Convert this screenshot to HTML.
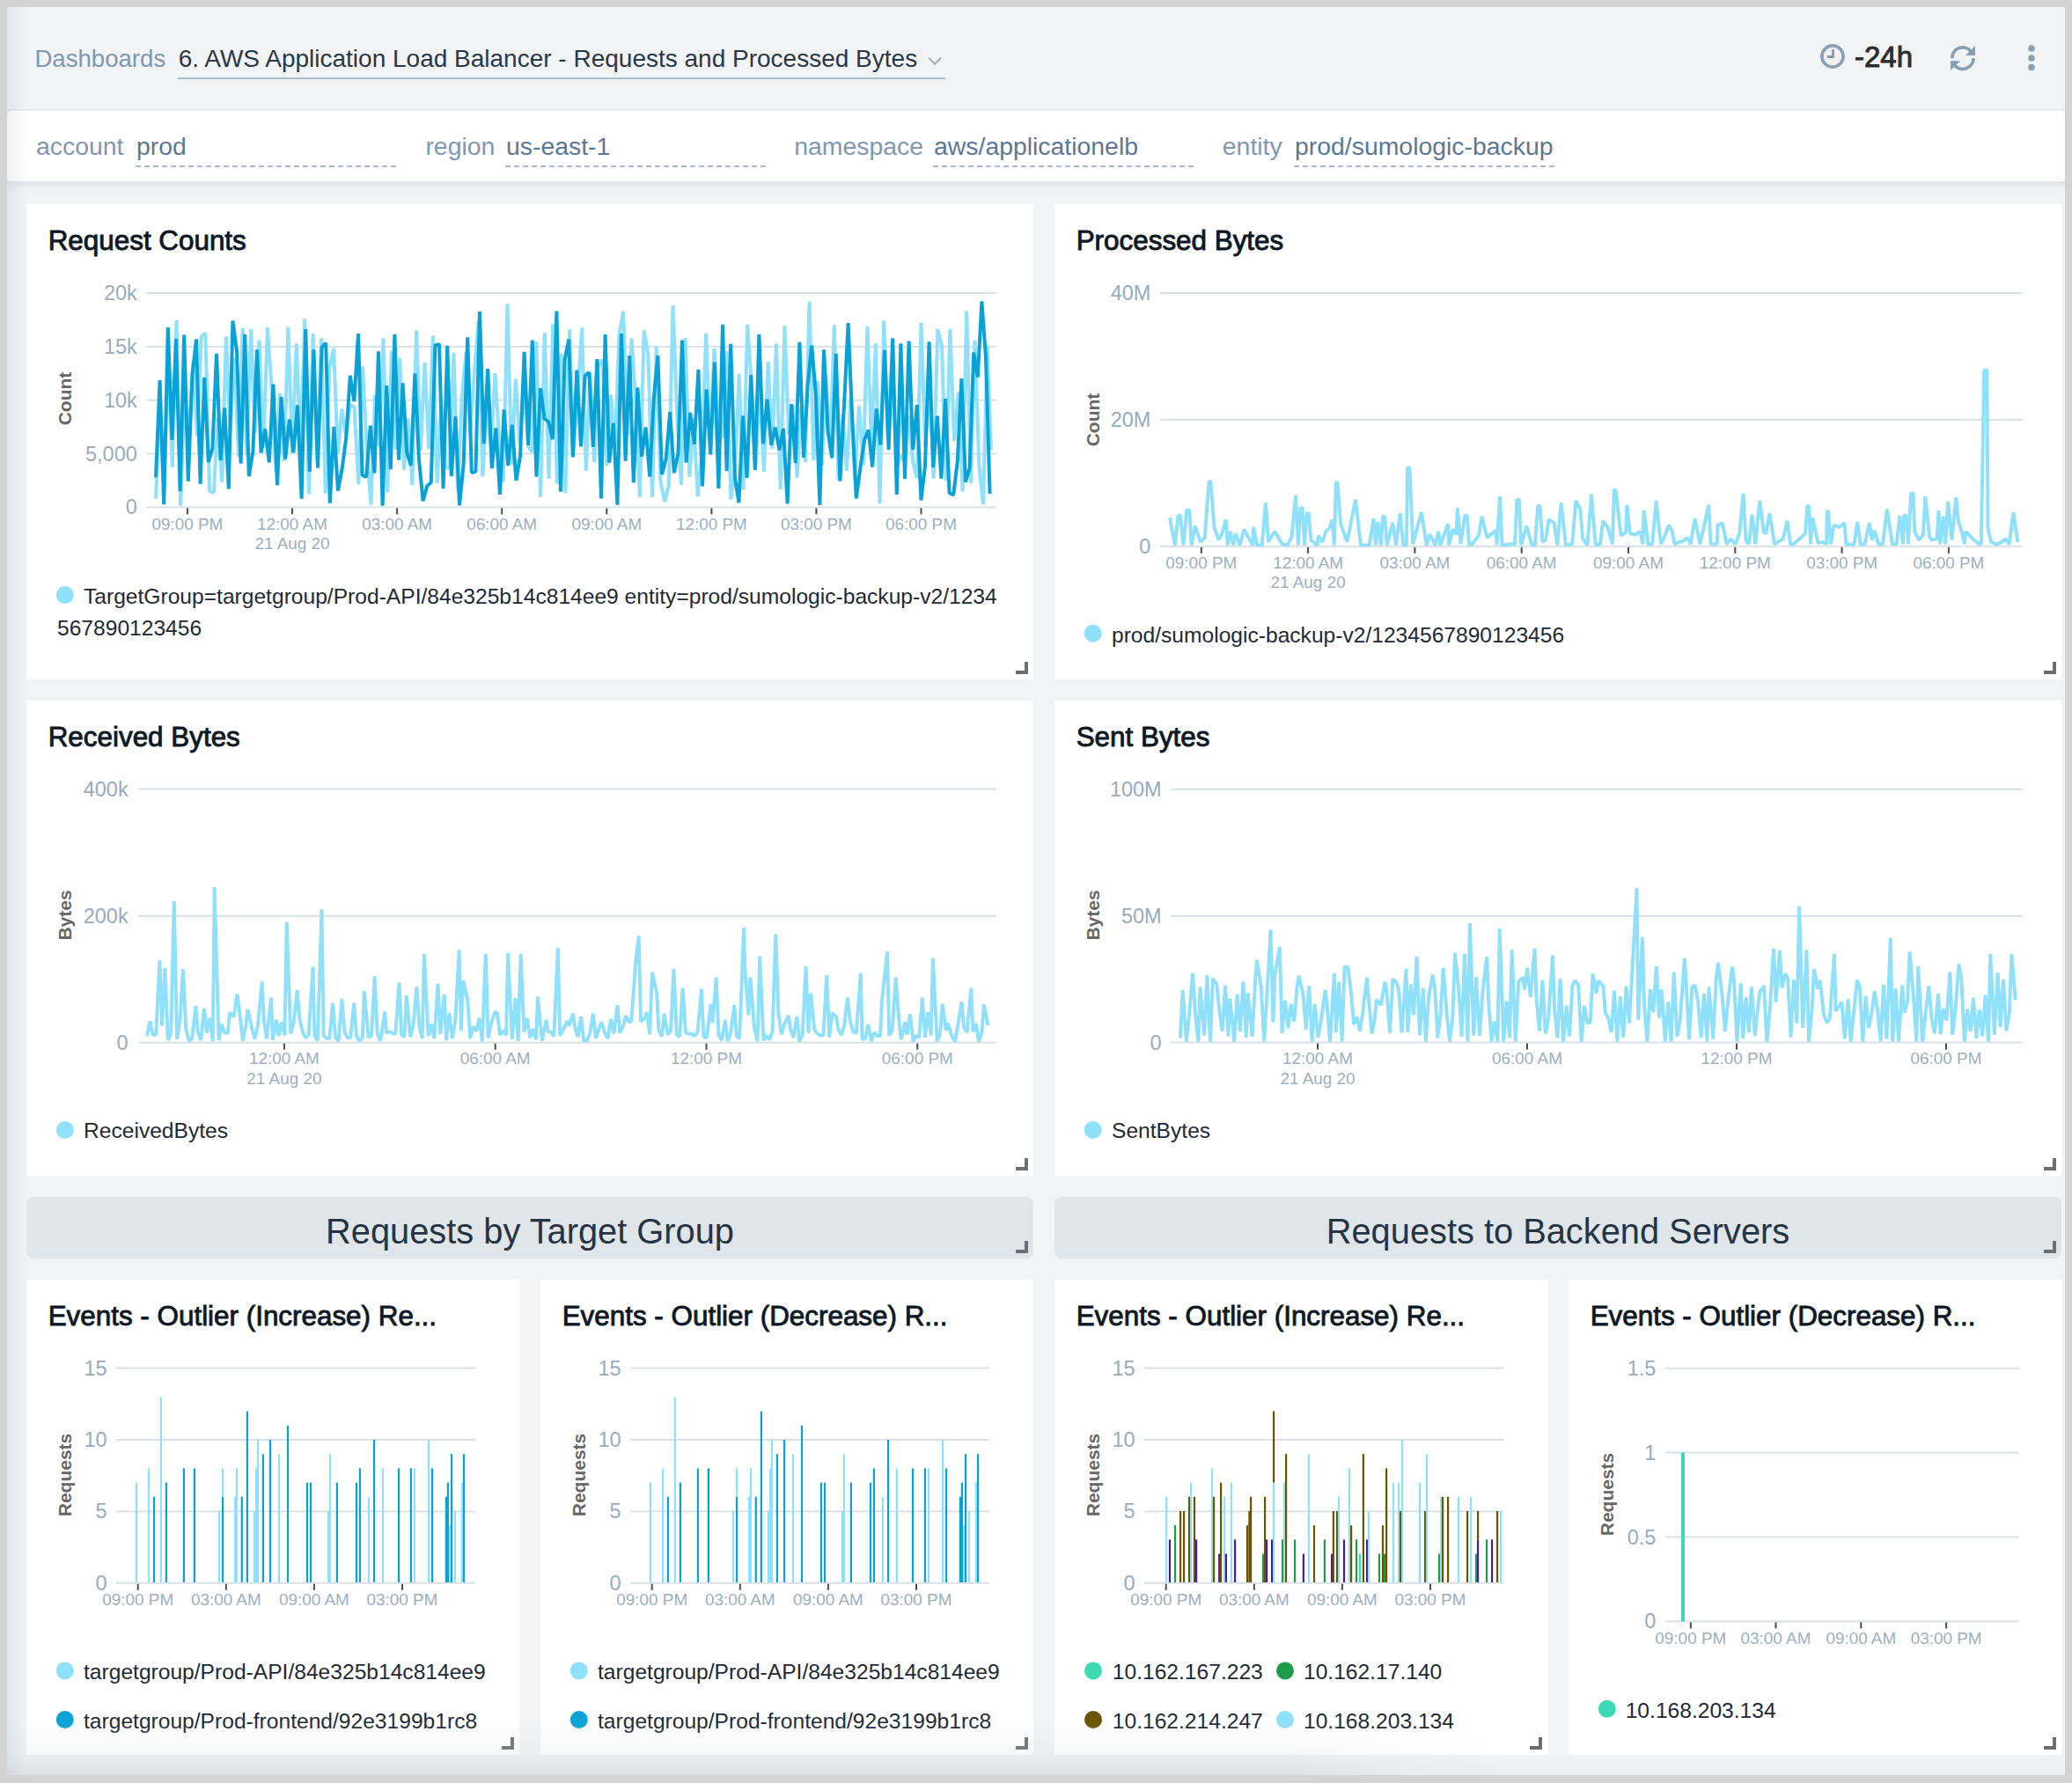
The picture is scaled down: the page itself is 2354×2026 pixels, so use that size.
<!DOCTYPE html>
<html><head><meta charset="utf-8"><style>
html,body{margin:0;padding:0;}
body{width:2354px;height:2026px;overflow:hidden;background:#d3d3d3;position:relative;font-family:"Liberation Sans", sans-serif;}
#app{position:absolute;left:8px;top:8px;width:2338px;height:2009px;background:#f2f3f5;}
#shl{position:absolute;left:8px;top:8px;width:24px;height:2009px;background:linear-gradient(90deg,rgba(60,70,80,.075),rgba(60,70,80,0));}
#shb{position:absolute;left:8px;top:206px;width:2338px;height:13px;background:linear-gradient(180deg,rgba(150,165,180,.2),rgba(150,165,180,.06) 55%,rgba(150,165,180,0));}
#fade{position:absolute;left:8px;top:1950px;width:1700px;height:67px;background:linear-gradient(180deg,rgba(205,208,211,0),rgba(205,208,211,.16) 62%,rgba(195,199,203,.42));-webkit-mask-image:linear-gradient(90deg,#000 85%,transparent);}
#fade2{position:absolute;left:1640px;top:1990px;width:706px;height:27px;background:linear-gradient(180deg,rgba(205,208,211,0),rgba(205,208,211,.12));}
svg{position:absolute;left:0;top:0;}
text{font-family:"Liberation Sans", sans-serif;}
</style></head><body>
<div id="app"></div>
<svg width="2354" height="2026" viewBox="0 0 2354 2026">
<rect x="30" y="232" width="1144" height="540" fill="#fff"/>
<text x="54.7" y="283.5" font-size="31.4" fill="#0d1926" font-weight="normal" text-anchor="start" stroke="#0d1926" stroke-width="0.9">Request Counts</text>
<path d="M1154 764H1166V752" stroke="#6e6e6e" stroke-width="4" fill="none" stroke-linecap="butt"/>
<rect x="1198" y="232" width="1144" height="540" fill="#fff"/>
<text x="1222.7" y="283.5" font-size="31.4" fill="#0d1926" font-weight="normal" text-anchor="start" stroke="#0d1926" stroke-width="0.9">Processed Bytes</text>
<path d="M2322 764H2334V752" stroke="#6e6e6e" stroke-width="4" fill="none" stroke-linecap="butt"/>
<rect x="30" y="796" width="1144" height="540" fill="#fff"/>
<text x="54.7" y="847.5" font-size="31.4" fill="#0d1926" font-weight="normal" text-anchor="start" stroke="#0d1926" stroke-width="0.9">Received Bytes</text>
<path d="M1154 1328H1166V1316" stroke="#6e6e6e" stroke-width="4" fill="none" stroke-linecap="butt"/>
<rect x="1198" y="796" width="1144" height="540" fill="#fff"/>
<text x="1222.7" y="847.5" font-size="31.4" fill="#0d1926" font-weight="normal" text-anchor="start" stroke="#0d1926" stroke-width="0.9">Sent Bytes</text>
<path d="M2322 1328H2334V1316" stroke="#6e6e6e" stroke-width="4" fill="none" stroke-linecap="butt"/>
<rect x="166.5" y="332.0" width="965.5" height="2" fill="#d9e1e7"/>
<text x="155.8" y="341.0" font-size="23.5" fill="#97abbf" font-weight="normal" text-anchor="end" >20k</text>
<rect x="166.5" y="392.9" width="965.5" height="2" fill="#d9e1e7"/>
<text x="155.8" y="401.9" font-size="23.5" fill="#97abbf" font-weight="normal" text-anchor="end" >15k</text>
<rect x="166.5" y="453.7" width="965.5" height="2" fill="#d9e1e7"/>
<text x="155.8" y="462.7" font-size="23.5" fill="#97abbf" font-weight="normal" text-anchor="end" >10k</text>
<rect x="166.5" y="514.5" width="965.5" height="2" fill="#d9e1e7"/>
<text x="155.8" y="523.5" font-size="23.5" fill="#97abbf" font-weight="normal" text-anchor="end" >5,000</text>
<rect x="166.5" y="575.4" width="965.5" height="2" fill="#d9e1e7"/>
<text x="155.8" y="584.4" font-size="23.5" fill="#97abbf" font-weight="normal" text-anchor="end" >0</text>
<rect x="211.9" y="577.4" width="2" height="7" fill="#4d4d4d"/>
<text x="212.9" y="601.6" font-size="18.9" fill="#9cafc1" font-weight="normal" text-anchor="middle" >09:00 PM</text>
<rect x="331.0" y="577.4" width="2" height="7" fill="#4d4d4d"/>
<text x="332.0" y="601.6" font-size="18.9" fill="#9cafc1" font-weight="normal" text-anchor="middle" >12:00 AM</text>
<text x="332.0" y="624.1" font-size="18.9" fill="#9cafc1" font-weight="normal" text-anchor="middle" >21 Aug 20</text>
<rect x="450.1" y="577.4" width="2" height="7" fill="#4d4d4d"/>
<text x="451.1" y="601.6" font-size="18.9" fill="#9cafc1" font-weight="normal" text-anchor="middle" >03:00 AM</text>
<rect x="569.2" y="577.4" width="2" height="7" fill="#4d4d4d"/>
<text x="570.2" y="601.6" font-size="18.9" fill="#9cafc1" font-weight="normal" text-anchor="middle" >06:00 AM</text>
<rect x="688.3" y="577.4" width="2" height="7" fill="#4d4d4d"/>
<text x="689.3" y="601.6" font-size="18.9" fill="#9cafc1" font-weight="normal" text-anchor="middle" >09:00 AM</text>
<rect x="807.4" y="577.4" width="2" height="7" fill="#4d4d4d"/>
<text x="808.4" y="601.6" font-size="18.9" fill="#9cafc1" font-weight="normal" text-anchor="middle" >12:00 PM</text>
<rect x="926.4" y="577.4" width="2" height="7" fill="#4d4d4d"/>
<text x="927.4" y="601.6" font-size="18.9" fill="#9cafc1" font-weight="normal" text-anchor="middle" >03:00 PM</text>
<rect x="1045.5" y="577.4" width="2" height="7" fill="#4d4d4d"/>
<text x="1046.5" y="601.6" font-size="18.9" fill="#9cafc1" font-weight="normal" text-anchor="middle" >06:00 PM</text>
<text x="0" y="0" font-size="21" fill="#676767" font-weight="bold" text-anchor="middle" transform="translate(81.0,453.0) rotate(-90)">Count</text>
<polyline points="177.0,566.8 181.7,463.0 186.4,556.7 191.1,402.5 195.8,530.8 200.5,363.8 205.2,574.7 209.9,440.9 214.6,495.0 219.3,411.4 224.0,495.2 228.7,382.3 233.4,378.6 238.1,557.8 242.8,559.9 247.5,474.3 252.2,547.9 256.9,382.4 261.6,491.8 266.3,406.9 271.0,518.9 275.7,372.6 280.4,517.2 285.1,373.8 289.8,491.9 294.5,386.5 299.2,509.2 303.9,372.1 308.6,440.3 313.3,535.9 318.0,446.9 322.7,524.2 327.4,371.6 332.1,514.6 336.8,390.3 341.5,511.2 346.2,362.4 350.9,561.4 355.6,379.0 360.3,524.1 365.0,384.2 369.7,560.7 374.4,418.4 379.1,396.1 383.8,515.3 388.5,464.8 393.2,496.1 397.9,459.8 402.6,462.8 407.3,550.2 412.0,416.4 416.7,510.1 421.4,573.6 426.1,449.1 430.8,507.1 435.5,384.5 440.2,559.5 444.9,398.4 449.6,510.7 454.3,406.8 459.0,533.8 463.7,475.1 468.4,551.1 473.1,375.6 477.8,511.9 482.5,412.1 487.2,510.2 491.9,381.2 496.6,549.2 501.3,457.4 506.0,530.2 510.7,532.2 515.4,400.7 520.1,557.5 524.8,451.0 529.5,400.0 534.2,492.6 538.9,422.2 543.6,364.6 548.3,541.6 553.0,462.7 557.7,508.0 562.4,423.8 567.1,499.7 571.8,547.5 576.5,345.3 581.2,527.9 585.9,430.7 590.6,504.9 595.3,426.9 600.0,506.8 604.7,513.5 609.4,388.3 614.1,564.7 618.8,378.4 623.5,543.9 628.2,368.1 632.9,549.7 637.6,401.6 642.3,560.5 647.0,374.3 651.7,512.2 656.4,448.3 661.1,372.3 665.8,535.0 670.5,423.3 675.2,525.2 679.9,415.6 684.6,408.5 689.3,529.4 694.0,448.5 698.7,509.4 703.4,380.1 708.1,353.9 712.8,493.8 717.5,384.5 722.2,458.2 726.9,565.0 731.6,375.3 736.3,402.4 741.0,564.8 745.7,393.7 750.4,546.9 755.1,570.3 759.8,551.8 764.5,347.0 769.2,470.6 773.9,551.0 778.6,384.1 783.3,542.0 788.0,474.8 792.7,564.1 797.4,516.3 802.1,378.5 806.8,497.7 811.5,396.0 816.2,477.5 820.9,497.7 825.6,399.1 830.3,567.4 835.0,534.6 839.7,425.0 844.4,556.6 849.1,368.7 853.8,435.7 858.5,528.1 863.2,440.1 867.9,536.2 872.6,411.1 877.3,510.2 882.0,390.3 886.7,556.0 891.4,370.0 896.1,493.6 900.8,460.7 905.5,543.0 910.2,464.3 914.9,525.1 919.6,342.5 924.3,523.1 929.0,432.9 933.7,529.0 938.4,425.0 943.1,510.6 947.8,369.2 952.5,544.7 957.2,471.0 961.9,534.9 966.6,449.8 971.3,543.9 976.0,461.3 980.7,528.8 985.4,370.9 990.1,505.7 994.8,390.3 999.5,572.2 1004.2,364.4 1008.9,501.1 1013.6,399.6 1018.3,531.9 1023.0,517.1 1027.7,524.9 1032.4,472.5 1037.1,525.0 1041.8,543.0 1046.5,366.7 1051.2,508.7 1055.9,433.4 1060.6,543.6 1065.3,373.9 1070.0,392.9 1074.7,546.1 1079.4,373.9 1084.1,501.3 1088.8,445.7 1093.5,558.5 1098.2,353.4 1102.9,549.3 1107.6,387.0 1112.3,528.8 1117.0,573.1 1121.7,394.3 1126.0,511.3" fill="none" stroke="#8ee0fb" stroke-width="4" stroke-linejoin="bevel"/>
<polyline points="177.0,542.4 181.6,432.0 186.2,573.2 190.8,372.0 195.4,500.0 200.0,385.1 204.6,558.2 209.2,380.5 213.8,546.8 218.4,426.7 223.0,385.4 227.6,550.0 232.2,428.8 236.8,525.1 241.4,509.5 246.0,401.8 250.6,523.0 255.2,463.6 259.8,555.7 264.4,364.6 269.0,398.8 273.6,526.8 278.2,379.9 282.8,541.3 287.4,512.8 292.0,397.3 296.6,514.5 301.2,487.4 305.8,525.4 310.4,436.7 315.0,551.5 319.6,451.2 324.2,521.7 328.8,476.4 333.4,514.3 338.0,460.4 342.6,566.7 347.2,374.1 351.8,535.9 356.4,397.4 361.0,531.8 365.6,394.6 370.2,389.8 374.8,571.6 379.4,485.0 384.0,557.5 388.6,532.9 393.2,498.1 397.8,426.9 402.4,456.2 407.0,379.0 411.6,539.9 416.2,542.0 420.8,483.6 425.4,537.6 430.0,399.2 434.6,574.6 439.2,438.0 443.8,533.3 448.4,379.9 453.0,522.6 457.6,435.4 462.2,514.2 466.8,529.0 471.4,424.3 476.0,522.4 480.6,569.2 485.2,552.3 489.8,547.9 494.4,392.4 499.0,391.2 503.6,555.2 508.2,392.8 512.8,541.2 517.4,473.3 522.0,574.2 526.6,527.8 531.2,383.3 535.8,537.0 540.4,535.8 545.0,354.1 549.6,504.1 554.2,419.1 558.8,532.2 563.4,486.3 568.0,562.0 572.6,465.3 577.2,529.1 581.8,482.8 586.4,546.0 591.0,518.6 595.6,399.9 600.2,506.0 604.8,386.7 609.4,541.7 614.0,441.2 618.6,475.9 623.2,479.1 627.8,499.3 632.4,353.5 637.0,558.7 641.6,408.7 646.2,385.6 650.8,519.5 655.4,420.6 660.0,507.4 664.6,427.1 669.2,423.0 673.8,507.9 678.4,408.1 683.0,566.4 687.6,380.0 692.2,525.7 696.8,480.8 701.4,573.6 706.0,378.8 710.6,523.9 715.2,404.2 719.8,548.5 724.4,440.4 729.0,518.8 733.6,485.5 738.2,541.7 742.8,452.5 747.4,404.0 752.0,539.3 756.6,521.6 761.2,468.2 765.8,537.4 770.4,515.2 775.0,386.6 779.6,525.6 784.2,469.0 788.8,505.0 793.4,420.0 798.0,552.5 802.6,442.3 807.2,516.5 811.8,411.5 816.4,555.0 821.0,368.9 825.6,535.2 830.2,390.9 834.8,541.5 839.4,571.2 844.0,472.5 848.6,543.0 853.2,426.0 857.8,534.2 862.4,379.9 867.0,504.3 871.6,453.6 876.2,505.6 880.8,485.6 885.4,511.4 890.0,487.2 894.6,572.5 899.2,459.2 903.8,526.1 908.4,388.7 913.0,519.9 917.6,437.6 922.2,392.6 926.8,447.6 931.4,574.0 936.0,397.3 940.6,490.3 945.2,520.5 949.8,401.8 954.4,546.7 959.0,460.8 963.6,367.1 968.2,475.4 972.8,566.3 977.4,531.3 982.0,500.2 986.6,488.5 991.2,530.7 995.8,464.5 1000.4,505.5 1005.0,397.9 1009.6,511.2 1014.2,384.2 1018.8,561.9 1023.4,390.4 1028.0,544.1 1032.6,387.5 1037.2,510.9 1041.8,460.1 1046.4,568.4 1051.0,529.5 1055.6,388.2 1060.2,531.2 1064.8,472.7 1069.4,543.8 1074.0,453.0 1078.6,560.1 1083.2,562.4 1087.8,523.9 1092.4,430.2 1097.0,547.8 1101.6,531.7 1106.2,400.6 1110.8,428.6 1115.4,342.5 1120.0,406.4 1124.6,561.1" fill="none" stroke="#0aa2d6" stroke-width="4" stroke-linejoin="bevel"/>
<circle cx="73.8" cy="676" r="10" fill="#8ee0fb"/>
<text x="95.0" y="685.6" font-size="24.6" fill="#1d2936" font-weight="normal" text-anchor="start" >TargetGroup=targetgroup/Prod-API/84e325b14c814ee9 entity=prod/sumologic-backup-v2/1234</text>
<text x="65.0" y="721.6" font-size="24.6" fill="#1d2936" font-weight="normal" text-anchor="start" >567890123456</text>
<rect x="1318" y="332.0" width="980" height="2" fill="#d9e1e7"/>
<text x="1307.4" y="341.0" font-size="23.5" fill="#97abbf" font-weight="normal" text-anchor="end" >40M</text>
<rect x="1318" y="475.9" width="980" height="2" fill="#d9e1e7"/>
<text x="1307.4" y="484.9" font-size="23.5" fill="#97abbf" font-weight="normal" text-anchor="end" >20M</text>
<rect x="1318" y="619.8" width="980" height="2" fill="#d9e1e7"/>
<text x="1307.4" y="628.8" font-size="23.5" fill="#97abbf" font-weight="normal" text-anchor="end" >0</text>
<rect x="1363.8" y="621.8" width="2" height="7" fill="#4d4d4d"/>
<text x="1364.8" y="645.6" font-size="18.9" fill="#9cafc1" font-weight="normal" text-anchor="middle" >09:00 PM</text>
<rect x="1485.1" y="621.8" width="2" height="7" fill="#4d4d4d"/>
<text x="1486.1" y="645.6" font-size="18.9" fill="#9cafc1" font-weight="normal" text-anchor="middle" >12:00 AM</text>
<text x="1486.1" y="668.1" font-size="18.9" fill="#9cafc1" font-weight="normal" text-anchor="middle" >21 Aug 20</text>
<rect x="1606.4" y="621.8" width="2" height="7" fill="#4d4d4d"/>
<text x="1607.4" y="645.6" font-size="18.9" fill="#9cafc1" font-weight="normal" text-anchor="middle" >03:00 AM</text>
<rect x="1727.7" y="621.8" width="2" height="7" fill="#4d4d4d"/>
<text x="1728.7" y="645.6" font-size="18.9" fill="#9cafc1" font-weight="normal" text-anchor="middle" >06:00 AM</text>
<rect x="1849.0" y="621.8" width="2" height="7" fill="#4d4d4d"/>
<text x="1850.0" y="645.6" font-size="18.9" fill="#9cafc1" font-weight="normal" text-anchor="middle" >09:00 AM</text>
<rect x="1970.3" y="621.8" width="2" height="7" fill="#4d4d4d"/>
<text x="1971.3" y="645.6" font-size="18.9" fill="#9cafc1" font-weight="normal" text-anchor="middle" >12:00 PM</text>
<rect x="2091.6" y="621.8" width="2" height="7" fill="#4d4d4d"/>
<text x="2092.6" y="645.6" font-size="18.9" fill="#9cafc1" font-weight="normal" text-anchor="middle" >03:00 PM</text>
<rect x="2212.9" y="621.8" width="2" height="7" fill="#4d4d4d"/>
<text x="2213.9" y="645.6" font-size="18.9" fill="#9cafc1" font-weight="normal" text-anchor="middle" >06:00 PM</text>
<text x="0" y="0" font-size="21" fill="#676767" font-weight="bold" text-anchor="middle" transform="translate(1248.7,477.0) rotate(-90)">Count</text>
<polyline points="1328.9,588.1 1334.9,619.4 1338.5,585.7 1340.9,585.7 1344.5,619.4 1348.2,579.6 1351.3,579.6 1353.7,619.4 1357.8,597.7 1363.8,615.8 1368.7,611.0 1373.5,547.1 1375.4,547.1 1379.5,598.9 1384.4,613.4 1388.0,607.4 1392.8,590.5 1394.7,619.4 1397.6,603.8 1401.3,619.4 1403.7,606.2 1408.5,619.4 1413.3,601.4 1423.0,619.4 1424.2,598.9 1427.8,619.4 1433.8,619.4 1437.9,571.2 1441.1,615.8 1448.3,603.8 1456.8,618.2 1462.8,619.4 1467.6,609.8 1472.0,562.7 1474.9,619.4 1477.3,577.2 1479.7,577.2 1482.1,619.4 1484.5,583.3 1486.9,583.3 1489.3,613.4 1496.6,619.4 1497.8,608.6 1502.6,615.8 1506.2,603.8 1511.1,598.9 1513.5,590.5 1515.9,619.4 1517.8,548.3 1519.5,548.3 1523.1,595.3 1530.4,615.8 1540.0,567.6 1546.0,619.4 1555.7,619.4 1560.5,589.3 1562.9,619.4 1565.3,592.9 1569.0,619.4 1570.9,586.9 1573.3,586.9 1575.7,619.4 1582.2,594.1 1585.9,619.4 1590.7,583.3 1594.3,619.4 1597.9,619.4 1599.1,531.4 1601.5,531.4 1605.2,618.2 1614.8,582.0 1620.8,619.4 1624.5,607.4 1630.5,619.4 1634.1,603.8 1636.5,619.4 1645.0,595.3 1646.2,619.4 1650.5,601.4 1654.6,607.4 1655.8,577.2 1659.5,618.2 1664.3,585.7 1666.7,585.7 1669.1,619.4 1672.7,618.2 1680.0,608.6 1683.6,586.9 1689.6,611.0 1699.3,602.6 1700.5,619.4 1704.1,563.9 1706.5,619.4 1716.2,618.2 1721.0,618.2 1723.4,567.6 1725.8,567.6 1728.2,619.4 1734.3,597.7 1740.3,619.4 1743.9,619.4 1747.1,574.8 1749.5,574.8 1752.4,615.8 1756.0,613.4 1759.6,590.5 1765.6,594.1 1769.3,619.4 1773.6,571.2 1778.9,619.4 1786.1,618.2 1790.5,568.8 1795.3,578.4 1798.2,612.2 1803.5,619.4 1807.9,561.5 1812.7,619.4 1818.0,618.2 1821.2,591.8 1826.5,599.1 1831.9,618.4 1833.8,556.9 1835.7,556.9 1841.5,608.7 1847.1,605.1 1848.3,573.7 1851.9,606.3 1857.9,607.5 1863.2,603.9 1866.4,618.4 1867.6,579.8 1872.4,618.4 1877.2,618.4 1881.6,568.9 1886.9,618.4 1890.5,611.1 1896.0,596.7 1899.4,602.7 1902.6,618.4 1907.4,616.0 1912.2,614.8 1917.0,611.1 1920.7,618.4 1925.5,589.4 1931.5,618.4 1941.2,573.7 1943.6,618.4 1950.8,618.4 1951.5,596.7 1956.9,594.3 1961.7,618.4 1966.5,612.4 1971.3,618.4 1976.2,606.3 1980.5,560.5 1983.4,613.6 1987.0,618.4 1990.6,584.6 1994.3,618.4 1999.1,568.9 2003.9,605.1 2006.3,606.3 2010.4,583.4 2016.0,618.4 2025.6,612.4 2030.5,591.8 2034.1,618.4 2037.7,618.4 2051.0,606.3 2053.4,575.0 2055.3,575.0 2057.0,618.4 2059.4,588.2 2065.4,617.2 2070.3,616.0 2075.1,618.4 2075.8,581.0 2077.0,581.0 2079.9,618.4 2083.5,596.7 2089.6,599.1 2095.6,594.3 2097.3,618.4 2106.5,618.4 2110.1,593.1 2113.7,618.4 2118.5,618.4 2123.8,594.3 2127.0,613.6 2129.4,602.7 2134.2,618.4 2139.0,618.4 2143.9,578.6 2149.9,618.4 2154.7,618.4 2158.3,585.8 2162.0,618.4 2163.2,585.8 2165.6,585.8 2168.0,618.4 2171.1,560.5 2173.6,560.5 2175.2,603.9 2180.1,613.6 2184.9,607.5 2187.3,564.1 2192.1,609.9 2194.5,613.6 2200.6,612.4 2202.5,579.8 2204.2,618.4 2207.8,587.0 2210.2,618.4 2213.1,570.1 2217.5,613.6 2222.3,565.3 2224.7,591.8 2228.3,602.7 2231.9,618.4 2233.2,603.9 2244.0,614.8 2248.8,618.4 2250.8,618.4 2254.2,420.5 2257.3,420.5 2258.5,600.3 2262.1,616.0 2268.1,618.4 2274.2,616.0 2279.0,612.4 2282.6,618.4 2287.5,582.2 2292.3,616.0" fill="none" stroke="#8ee0fb" stroke-width="3.9" stroke-linejoin="bevel"/>
<circle cx="1241.7" cy="719.8" r="10" fill="#8ee0fb"/>
<text x="1263.0" y="729.6" font-size="24.6" fill="#1d2936" font-weight="normal" text-anchor="start" >prod/sumologic-backup-v2/1234567890123456</text>
<rect x="156.4" y="895.6" width="975.6" height="2" fill="#d9e1e7"/>
<text x="145.7" y="904.6" font-size="23.5" fill="#97abbf" font-weight="normal" text-anchor="end" >400k</text>
<rect x="156.4" y="1039.8" width="975.6" height="2" fill="#d9e1e7"/>
<text x="145.7" y="1048.8" font-size="23.5" fill="#97abbf" font-weight="normal" text-anchor="end" >200k</text>
<rect x="156.4" y="1183.7" width="975.6" height="2" fill="#d9e1e7"/>
<text x="145.7" y="1192.7" font-size="23.5" fill="#97abbf" font-weight="normal" text-anchor="end" >0</text>
<rect x="321.9" y="1185.7" width="2" height="7" fill="#4d4d4d"/>
<text x="322.9" y="1209.3" font-size="18.9" fill="#9cafc1" font-weight="normal" text-anchor="middle" >12:00 AM</text>
<text x="322.9" y="1231.8" font-size="18.9" fill="#9cafc1" font-weight="normal" text-anchor="middle" >21 Aug 20</text>
<rect x="561.7" y="1185.7" width="2" height="7" fill="#4d4d4d"/>
<text x="562.7" y="1209.3" font-size="18.9" fill="#9cafc1" font-weight="normal" text-anchor="middle" >06:00 AM</text>
<rect x="801.5" y="1185.7" width="2" height="7" fill="#4d4d4d"/>
<text x="802.5" y="1209.3" font-size="18.9" fill="#9cafc1" font-weight="normal" text-anchor="middle" >12:00 PM</text>
<rect x="1041.3" y="1185.7" width="2" height="7" fill="#4d4d4d"/>
<text x="1042.3" y="1209.3" font-size="18.9" fill="#9cafc1" font-weight="normal" text-anchor="middle" >06:00 PM</text>
<text x="0" y="0" font-size="21" fill="#676767" font-weight="bold" text-anchor="middle" transform="translate(81.0,1040.0) rotate(-90)">Bytes</text>
<polyline points="167.0,1177.3 170.4,1160.5 173.8,1175.9 177.2,1175.9 181.4,1091.4 184.0,1165.7 187.4,1099.8 190.8,1182.1 194.2,1173.8 197.8,1023.8 201.0,1180.9 204.4,1160.7 207.9,1101.0 211.2,1169.0 214.6,1182.2 218.0,1181.4 222.4,1143.2 224.8,1172.7 228.2,1182.1 232.0,1145.6 235.0,1173.6 238.4,1156.6 241.8,1183.1 243.6,1008.1 248.6,1182.3 251.4,1163.7 255.4,1173.5 258.8,1174.0 261.0,1150.5 265.6,1155.5 269.4,1129.5 272.4,1152.6 275.8,1182.8 279.2,1165.7 281.5,1146.9 286.0,1167.7 289.4,1180.5 292.8,1165.6 297.7,1115.5 299.6,1156.6 303.0,1180.5 308.1,1133.6 309.8,1182.0 314.1,1158.9 316.6,1177.2 320.0,1161.3 323.4,1176.4 325.7,1047.9 330.2,1174.5 333.6,1162.4 337.7,1125.1 340.4,1158.0 343.8,1172.3 347.2,1179.5 350.6,1176.0 355.6,1098.6 357.4,1176.9 360.8,1182.4 365.5,1033.4 367.6,1176.8 371.0,1179.7 374.4,1180.2 378.0,1139.6 381.2,1179.6 384.6,1182.9 388.4,1134.8 391.4,1172.6 394.8,1179.2 398.2,1179.0 402.2,1139.6 405.0,1177.5 408.4,1182.3 411.8,1180.0 413.8,1126.3 418.6,1178.8 422.0,1176.9 425.6,1109.4 428.8,1174.6 432.2,1182.6 437.2,1149.3 439.0,1173.9 442.4,1172.1 445.8,1174.0 449.2,1175.1 453.6,1116.7 456.0,1175.7 459.4,1178.2 461.8,1131.2 466.2,1178.3 469.6,1164.7 473.4,1121.5 476.4,1166.1 479.8,1180.3 481.8,1084.1 486.6,1177.2 490.0,1163.7 493.4,1179.8 497.5,1117.9 500.2,1174.7 504.7,1130.0 507.0,1182.1 510.4,1151.0 513.8,1179.8 517.2,1161.4 521.6,1079.3 524.0,1171.1 526.0,1114.3 531.3,1136.0 534.2,1180.1 537.6,1166.5 541.0,1172.1 544.5,1156.5 547.8,1183.3 551.8,1084.1 554.6,1179.7 558.0,1162.6 562.6,1149.3 564.8,1151.5 568.2,1176.3 571.6,1170.7 575.0,1176.2 577.1,1082.9 581.8,1180.8 585.6,1134.1 588.6,1182.9 591.6,1084.1 595.4,1172.7 598.8,1157.0 602.2,1179.3 605.6,1169.1 609.0,1181.2 610.9,1132.4 615.8,1182.7 620.6,1158.9 622.6,1172.3 626.0,1172.5 629.4,1177.7 633.8,1076.9 636.2,1176.9 639.6,1170.4 644.7,1160.1 646.4,1165.9 650.9,1151.7 653.2,1166.7 656.6,1178.3 660.0,1155.3 663.4,1182.9 666.8,1182.5 670.2,1174.4 673.8,1151.7 677.0,1179.7 680.4,1169.1 683.4,1161.3 687.2,1174.0 690.6,1180.2 694.0,1158.0 697.4,1174.6 701.5,1142.0 704.2,1173.7 707.6,1166.7 711.2,1154.1 714.4,1161.1 717.2,1161.3 722.0,1096.2 725.7,1063.6 728.0,1160.8 732.9,1156.5 734.8,1150.3 738.2,1175.2 740.9,1104.6 746.2,1128.8 748.4,1171.1 751.8,1177.9 754.6,1151.7 758.6,1175.8 762.0,1170.9 765.5,1101.0 768.8,1176.0 772.2,1178.2 775.6,1122.7 779.0,1173.5 782.4,1174.8 785.8,1174.5 789.2,1177.3 792.6,1172.1 796.9,1123.9 799.4,1177.7 802.8,1179.5 807.7,1140.8 809.6,1162.2 813.7,1110.7 816.4,1175.7 819.8,1182.2 823.9,1158.9 826.6,1183.1 830.0,1174.6 834.3,1142.0 836.8,1177.3 840.2,1180.2 845.1,1053.9 846.3,1102.2 850.4,1153.6 852.4,1110.7 857.2,1169.4 860.6,1183.1 863.2,1086.5 867.4,1182.2 870.8,1176.5 874.2,1181.7 877.6,1172.1 881.3,1061.2 884.4,1150.9 887.8,1175.3 891.2,1163.5 895.8,1154.1 898.0,1169.7 901.4,1179.0 905.4,1155.3 908.2,1183.5 911.6,1176.6 915.6,1097.9 918.4,1173.8 921.1,1128.8 925.2,1169.6 928.6,1174.6 932.0,1176.5 935.4,1176.3 939.2,1108.2 942.2,1178.4 945.6,1150.8 950.1,1155.3 952.4,1169.7 955.8,1176.1 959.2,1165.6 962.9,1133.6 966.0,1161.4 969.4,1172.7 972.8,1174.1 977.8,1105.8 979.6,1181.1 983.0,1180.3 986.4,1164.4 989.8,1183.2 993.2,1173.2 996.6,1177.0 1000.0,1177.4 1002.0,1137.2 1008.0,1081.2 1010.2,1176.7 1013.6,1171.7 1017.7,1110.7 1021.3,1158.9 1023.8,1181.2 1028.5,1161.3 1030.6,1175.6 1034.0,1152.2 1037.4,1183.2 1040.8,1176.8 1044.2,1179.0 1047.8,1133.6 1051.0,1178.8 1054.4,1150.2 1057.8,1176.4 1059.9,1088.9 1064.6,1183.2 1068.0,1174.4 1070.7,1140.8 1074.8,1170.9 1076.8,1162.5 1081.6,1178.1 1085.0,1183.3 1088.4,1164.2 1092.5,1138.4 1095.2,1167.8 1098.6,1172.9 1103.3,1122.7 1105.4,1172.9 1108.8,1163.4 1112.2,1183.4 1115.6,1172.4 1117.8,1141.5 1122.4,1165.2" fill="none" stroke="#8ee0fb" stroke-width="3.9" stroke-linejoin="bevel"/>
<circle cx="73.8" cy="1284" r="10" fill="#8ee0fb"/>
<text x="95.0" y="1293.3" font-size="24.6" fill="#1d2936" font-weight="normal" text-anchor="start" >ReceivedBytes</text>
<rect x="1329.9" y="895.8" width="968.0999999999999" height="2" fill="#d9e1e7"/>
<text x="1319.7" y="904.8" font-size="23.5" fill="#97abbf" font-weight="normal" text-anchor="end" >100M</text>
<rect x="1329.9" y="1040.0" width="968.0999999999999" height="2" fill="#d9e1e7"/>
<text x="1319.7" y="1049.0" font-size="23.5" fill="#97abbf" font-weight="normal" text-anchor="end" >50M</text>
<rect x="1329.9" y="1183.6" width="968.0999999999999" height="2" fill="#d9e1e7"/>
<text x="1319.7" y="1192.6" font-size="23.5" fill="#97abbf" font-weight="normal" text-anchor="end" >0</text>
<rect x="1496.0" y="1185.6" width="2" height="7" fill="#4d4d4d"/>
<text x="1497.0" y="1209.3" font-size="18.9" fill="#9cafc1" font-weight="normal" text-anchor="middle" >12:00 AM</text>
<text x="1497.0" y="1231.8" font-size="18.9" fill="#9cafc1" font-weight="normal" text-anchor="middle" >21 Aug 20</text>
<rect x="1734.0" y="1185.6" width="2" height="7" fill="#4d4d4d"/>
<text x="1735.0" y="1209.3" font-size="18.9" fill="#9cafc1" font-weight="normal" text-anchor="middle" >06:00 AM</text>
<rect x="1972.0" y="1185.6" width="2" height="7" fill="#4d4d4d"/>
<text x="1973.0" y="1209.3" font-size="18.9" fill="#9cafc1" font-weight="normal" text-anchor="middle" >12:00 PM</text>
<rect x="2210.0" y="1185.6" width="2" height="7" fill="#4d4d4d"/>
<text x="2211.0" y="1209.3" font-size="18.9" fill="#9cafc1" font-weight="normal" text-anchor="middle" >06:00 PM</text>
<text x="0" y="0" font-size="21" fill="#676767" font-weight="bold" text-anchor="middle" transform="translate(1248.7,1040.0) rotate(-90)">Bytes</text>
<polyline points="1341.0,1179.3 1343.6,1125.1 1347.8,1183.5 1351.2,1152.4 1355.0,1105.8 1358.0,1151.4 1361.4,1183.5 1363.4,1121.5 1368.2,1176.6 1371.4,1107.8 1375.0,1183.5 1377.9,1111.9 1382.3,1118.4 1385.2,1146.7 1388.6,1171.7 1392.0,1119.7 1395.4,1177.4 1397.2,1134.8 1402.2,1183.5 1405.7,1130.0 1409.0,1172.3 1412.4,1115.7 1415.8,1179.1 1417.7,1128.3 1422.6,1177.8 1426.0,1115.5 1427.9,1090.9 1432.8,1122.1 1436.2,1183.5 1439.6,1126.6 1443.6,1056.4 1446.4,1161.7 1448.4,1108.2 1453.9,1076.1 1456.6,1174.0 1460.0,1136.6 1463.4,1168.4 1466.8,1140.6 1470.2,1160.7 1473.6,1121.0 1475.6,1108.7 1480.4,1129.3 1483.8,1170.0 1487.2,1120.4 1490.6,1183.5 1493.7,1140.8 1497.4,1179.1 1500.8,1159.9 1505.8,1125.1 1507.6,1141.5 1511.0,1183.5 1515.9,1106.3 1517.8,1173.3 1521.2,1115.5 1524.6,1183.5 1527.5,1098.6 1531.1,1098.6 1534.8,1126.5 1538.2,1164.1 1541.6,1155.5 1545.0,1171.6 1548.4,1149.3 1552.9,1110.7 1555.2,1138.3 1558.6,1174.4 1562.0,1157.0 1563.7,1136.0 1568.8,1142.1 1573.4,1115.5 1575.6,1127.4 1579.0,1173.7 1582.4,1112.5 1586.2,1115.5 1589.2,1125.2 1592.6,1173.4 1597.5,1101.0 1599.4,1172.9 1602.8,1118.7 1606.2,1153.2 1609.6,1087.2 1613.0,1176.3 1616.8,1122.7 1619.8,1183.5 1623.2,1131.8 1627.7,1107.5 1630.0,1121.2 1633.4,1179.6 1636.8,1149.9 1639.7,1099.8 1643.6,1150.7 1647.0,1183.5 1650.4,1155.2 1653.0,1082.9 1657.2,1123.7 1660.6,1178.2 1663.9,1084.1 1667.4,1183.5 1669.9,1049.1 1674.2,1176.6 1677.1,1110.2 1681.0,1176.9 1684.4,1128.2 1689.2,1087.2 1691.2,1138.3 1694.6,1183.5 1698.0,1160.8 1701.4,1183.5 1703.7,1055.2 1708.2,1183.5 1711.6,1137.3 1715.0,1179.2 1717.7,1079.3 1721.8,1183.5 1725.2,1115.5 1730.2,1110.7 1732.0,1124.4 1735.1,1099.8 1738.8,1133.4 1743.5,1077.6 1745.6,1136.3 1749.0,1171.2 1752.4,1113.9 1755.8,1175.0 1759.2,1156.5 1764.0,1085.3 1766.0,1145.4 1769.4,1179.4 1772.5,1111.9 1776.2,1183.5 1779.6,1142.7 1783.0,1177.6 1786.4,1120.1 1789.4,1114.3 1793.2,1119.3 1796.6,1183.5 1800.0,1143.0 1803.4,1162.6 1806.8,1161.5 1809.4,1106.6 1813.6,1128.8 1816.0,1114.3 1821.6,1120.3 1823.8,1151.0 1827.2,1157.0 1830.6,1173.2 1834.0,1125.9 1837.4,1183.5 1840.8,1132.1 1844.2,1179.0 1847.6,1120.7 1851.0,1162.9 1853.4,1120.3 1859.5,1009.3 1861.2,1158.7 1866.0,1064.8 1868.0,1141.0 1871.4,1183.5 1874.8,1124.0 1878.2,1150.3 1881.9,1098.1 1885.0,1156.4 1887.7,1124.4 1891.8,1183.5 1895.2,1138.5 1898.6,1183.5 1901.7,1104.6 1905.4,1177.8 1908.8,1158.3 1913.8,1088.9 1915.6,1115.7 1919.0,1181.2 1922.4,1121.4 1925.8,1119.6 1929.2,1138.8 1932.6,1179.2 1936.0,1128.9 1939.4,1183.5 1941.5,1121.5 1946.2,1180.9 1949.6,1115.4 1951.9,1093.8 1956.4,1130.0 1959.8,1172.2 1963.2,1136.8 1968.1,1098.6 1970.0,1113.6 1973.4,1183.5 1977.7,1117.4 1980.2,1179.8 1983.6,1133.2 1987.0,1173.0 1989.8,1121.5 1993.8,1177.2 1997.2,1144.1 1999.4,1127.1 2004.0,1120.1 2007.4,1183.5 2010.8,1146.0 2015.1,1078.1 2017.6,1138.7 2021.9,1079.8 2024.4,1122.5 2028.4,1106.3 2031.2,1112.6 2034.6,1178.3 2038.0,1113.3 2041.4,1162.6 2044.1,1029.8 2048.2,1168.0 2052.5,1079.3 2055.0,1183.5 2058.4,1149.0 2061.0,1101.0 2065.2,1124.0 2067.7,1114.3 2072.0,1152.7 2075.4,1162.1 2078.8,1157.6 2083.9,1083.6 2085.6,1149.0 2089.9,1142.5 2092.4,1138.2 2095.8,1180.0 2099.6,1135.3 2102.6,1183.5 2106.0,1150.5 2110.0,1113.6 2112.8,1121.2 2116.2,1183.5 2119.6,1131.9 2123.0,1168.0 2126.4,1151.5 2129.7,1126.3 2133.2,1148.8 2136.6,1183.5 2140.0,1119.1 2143.4,1180.5 2147.8,1066.0 2150.2,1183.5 2153.6,1123.4 2157.0,1183.5 2161.1,1119.6 2163.8,1150.9 2167.2,1137.0 2169.6,1081.7 2174.0,1134.4 2177.4,1183.5 2179.2,1098.1 2184.2,1183.5 2187.6,1151.6 2191.3,1120.3 2194.4,1156.5 2197.8,1174.2 2202.1,1129.2 2204.6,1175.2 2208.0,1146.1 2211.4,1159.9 2215.4,1104.6 2218.2,1175.8 2221.6,1146.3 2225.5,1095.5 2228.4,1112.5 2231.8,1183.5 2235.2,1146.8 2238.6,1171.7 2241.9,1133.6 2245.4,1179.8 2248.8,1147.2 2252.2,1177.3 2255.6,1130.7 2259.0,1183.5 2261.3,1084.1 2265.8,1176.0 2269.7,1105.3 2272.6,1167.2 2276.0,1113.0 2279.4,1171.5 2282.8,1150.7 2285.4,1084.1 2289.6,1136.5" fill="none" stroke="#8ee0fb" stroke-width="3.9" stroke-linejoin="bevel"/>
<circle cx="1241.7" cy="1284" r="10" fill="#8ee0fb"/>
<text x="1263.0" y="1293.3" font-size="24.6" fill="#1d2936" font-weight="normal" text-anchor="start" >SentBytes</text>
<rect x="30" y="1360" width="1144" height="70" rx="8" fill="#e0e5e9"/>
<path d="M1154 1422H1166V1410" stroke="#6e6e6e" stroke-width="4" fill="none" stroke-linecap="butt"/>
<rect x="1198" y="1360" width="1144" height="70" rx="8" fill="#e0e5e9"/>
<path d="M2322 1422H2334V1410" stroke="#6e6e6e" stroke-width="4" fill="none" stroke-linecap="butt"/>
<text x="602.0" y="1412.7" font-size="39.8" fill="#243444" font-weight="normal" text-anchor="middle" >Requests by Target Group</text>
<text x="1770.0" y="1412.7" font-size="39.8" fill="#243444" font-weight="normal" text-anchor="middle" >Requests to Backend Servers</text>
<rect x="30" y="1454" width="560" height="540" fill="#fff"/>
<text x="54.7" y="1505.5" font-size="31.4" fill="#0d1926" font-weight="normal" text-anchor="start" stroke="#0d1926" stroke-width="0.9">Events - Outlier (Increase) Re...</text>
<path d="M570 1986H582V1974" stroke="#6e6e6e" stroke-width="4" fill="none" stroke-linecap="butt"/>
<rect x="614" y="1454" width="560" height="540" fill="#fff"/>
<text x="638.7" y="1505.5" font-size="31.4" fill="#0d1926" font-weight="normal" text-anchor="start" stroke="#0d1926" stroke-width="0.9">Events - Outlier (Decrease) R...</text>
<path d="M1154 1986H1166V1974" stroke="#6e6e6e" stroke-width="4" fill="none" stroke-linecap="butt"/>
<rect x="1198" y="1454" width="560" height="540" fill="#fff"/>
<text x="1222.7" y="1505.5" font-size="31.4" fill="#0d1926" font-weight="normal" text-anchor="start" stroke="#0d1926" stroke-width="0.9">Events - Outlier (Increase) Re...</text>
<path d="M1738 1986H1750V1974" stroke="#6e6e6e" stroke-width="4" fill="none" stroke-linecap="butt"/>
<rect x="1782" y="1454" width="560" height="540" fill="#fff"/>
<text x="1806.7" y="1505.5" font-size="31.4" fill="#0d1926" font-weight="normal" text-anchor="start" stroke="#0d1926" stroke-width="0.9">Events - Outlier (Decrease) R...</text>
<path d="M2322 1986H2334V1974" stroke="#6e6e6e" stroke-width="4" fill="none" stroke-linecap="butt"/>
<rect x="131.8" y="1553.6" width="408.2" height="2" fill="#d9e1e7"/>
<text x="121.6" y="1562.6" font-size="23.5" fill="#97abbf" font-weight="normal" text-anchor="end" >15</text>
<rect x="131.8" y="1635.0" width="408.2" height="2" fill="#d9e1e7"/>
<text x="121.6" y="1644.0" font-size="23.5" fill="#97abbf" font-weight="normal" text-anchor="end" >10</text>
<rect x="131.8" y="1716.4" width="408.2" height="2" fill="#d9e1e7"/>
<text x="121.6" y="1725.4" font-size="23.5" fill="#97abbf" font-weight="normal" text-anchor="end" >5</text>
<rect x="131.8" y="1797.8" width="408.2" height="2" fill="#d9e1e7"/>
<text x="121.6" y="1806.8" font-size="23.5" fill="#97abbf" font-weight="normal" text-anchor="end" >0</text>
<rect x="155.7" y="1799.8" width="2" height="7" fill="#4d4d4d"/>
<text x="156.7" y="1823.5" font-size="18.9" fill="#9cafc1" font-weight="normal" text-anchor="middle" >09:00 PM</text>
<rect x="255.8" y="1799.8" width="2" height="7" fill="#4d4d4d"/>
<text x="256.8" y="1823.5" font-size="18.9" fill="#9cafc1" font-weight="normal" text-anchor="middle" >03:00 AM</text>
<rect x="355.9" y="1799.8" width="2" height="7" fill="#4d4d4d"/>
<text x="356.9" y="1823.5" font-size="18.9" fill="#9cafc1" font-weight="normal" text-anchor="middle" >09:00 AM</text>
<rect x="456.0" y="1799.8" width="2" height="7" fill="#4d4d4d"/>
<text x="457.0" y="1823.5" font-size="18.9" fill="#9cafc1" font-weight="normal" text-anchor="middle" >03:00 PM</text>
<text x="0" y="0" font-size="21" fill="#676767" font-weight="bold" text-anchor="middle" transform="translate(81.0,1676.0) rotate(-90)">Requests</text>
<rect x="153.9" y="1684.6" width="2.2" height="113.4" fill="#8ee0fb"/>
<rect x="168.0" y="1668.4" width="2.2" height="129.6" fill="#8ee0fb"/>
<rect x="173.9" y="1700.8" width="2.2" height="97.2" fill="#0aa2d6"/>
<rect x="181.8" y="1587.4" width="2.2" height="210.6" fill="#8ee0fb"/>
<rect x="187.8" y="1684.6" width="2.2" height="113.4" fill="#0aa2d6"/>
<rect x="207.8" y="1668.4" width="2.2" height="129.6" fill="#0aa2d6"/>
<rect x="219.8" y="1668.4" width="2.2" height="129.6" fill="#0aa2d6"/>
<rect x="247.9" y="1717.0" width="2.2" height="81.0" fill="#8ee0fb"/>
<rect x="252.0" y="1700.8" width="2.2" height="97.2" fill="#0aa2d6"/>
<rect x="252.0" y="1668.4" width="2.2" height="32.4" fill="#8ee0fb"/>
<rect x="266.0" y="1700.8" width="2.2" height="97.2" fill="#8ee0fb"/>
<rect x="267.9" y="1668.4" width="2.2" height="129.6" fill="#8ee0fb"/>
<rect x="273.7" y="1700.8" width="2.2" height="97.2" fill="#0aa2d6"/>
<rect x="279.8" y="1603.6" width="2.2" height="194.4" fill="#0aa2d6"/>
<rect x="288.0" y="1717.0" width="2.2" height="81.0" fill="#8ee0fb"/>
<rect x="289.9" y="1668.4" width="2.2" height="129.6" fill="#8ee0fb"/>
<rect x="291.9" y="1636.0" width="2.2" height="162.0" fill="#8ee0fb"/>
<rect x="297.8" y="1652.2" width="2.2" height="145.8" fill="#0aa2d6"/>
<rect x="306.0" y="1636.0" width="2.2" height="162.0" fill="#0aa2d6"/>
<rect x="315.9" y="1652.2" width="2.2" height="145.8" fill="#8ee0fb"/>
<rect x="325.9" y="1619.8" width="2.2" height="178.2" fill="#0aa2d6"/>
<rect x="347.9" y="1684.6" width="2.2" height="113.4" fill="#0aa2d6"/>
<rect x="351.9" y="1684.6" width="2.2" height="113.4" fill="#0aa2d6"/>
<rect x="372.0" y="1717.0" width="2.2" height="81.0" fill="#8ee0fb"/>
<rect x="373.9" y="1652.2" width="2.2" height="145.8" fill="#8ee0fb"/>
<rect x="381.8" y="1684.6" width="2.2" height="113.4" fill="#0aa2d6"/>
<rect x="403.9" y="1684.6" width="2.2" height="113.4" fill="#0aa2d6"/>
<rect x="407.8" y="1668.4" width="2.2" height="129.6" fill="#0aa2d6"/>
<rect x="417.8" y="1700.8" width="2.2" height="97.2" fill="#8ee0fb"/>
<rect x="424.0" y="1636.0" width="2.2" height="162.0" fill="#0aa2d6"/>
<rect x="433.9" y="1668.4" width="2.2" height="129.6" fill="#8ee0fb"/>
<rect x="452.0" y="1668.4" width="2.2" height="129.6" fill="#0aa2d6"/>
<rect x="465.8" y="1668.4" width="2.2" height="129.6" fill="#0aa2d6"/>
<rect x="469.8" y="1668.4" width="2.2" height="129.6" fill="#8ee0fb"/>
<rect x="486.0" y="1636.0" width="2.2" height="162.0" fill="#8ee0fb"/>
<rect x="490.0" y="1668.4" width="2.2" height="129.6" fill="#0aa2d6"/>
<rect x="505.8" y="1700.8" width="2.2" height="97.2" fill="#0aa2d6"/>
<rect x="507.8" y="1684.6" width="2.2" height="113.4" fill="#0aa2d6"/>
<rect x="510.0" y="1733.2" width="2.2" height="64.8" fill="#8ee0fb"/>
<rect x="512.0" y="1652.2" width="2.2" height="145.8" fill="#0aa2d6"/>
<rect x="515.9" y="1717.0" width="2.2" height="81.0" fill="#8ee0fb"/>
<rect x="523.8" y="1684.6" width="2.2" height="113.4" fill="#8ee0fb"/>
<rect x="526.0" y="1652.2" width="2.2" height="145.8" fill="#0aa2d6"/>
<circle cx="73.8" cy="1898.4" r="10" fill="#8ee0fb"/>
<text x="95.0" y="1908.0" font-size="24.6" fill="#1d2936" font-weight="normal" text-anchor="start" >targetgroup/Prod-API/84e325b14c814ee9</text>
<circle cx="73.8" cy="1954" r="10" fill="#0aa2d6"/>
<text x="95.0" y="1963.6" font-size="24.6" fill="#1d2936" font-weight="normal" text-anchor="start" >targetgroup/Prod-frontend/92e3199b1rc8</text>
<rect x="715.8" y="1553.6" width="408.20000000000005" height="2" fill="#d9e1e7"/>
<text x="705.6" y="1562.6" font-size="23.5" fill="#97abbf" font-weight="normal" text-anchor="end" >15</text>
<rect x="715.8" y="1635.0" width="408.20000000000005" height="2" fill="#d9e1e7"/>
<text x="705.6" y="1644.0" font-size="23.5" fill="#97abbf" font-weight="normal" text-anchor="end" >10</text>
<rect x="715.8" y="1716.4" width="408.20000000000005" height="2" fill="#d9e1e7"/>
<text x="705.6" y="1725.4" font-size="23.5" fill="#97abbf" font-weight="normal" text-anchor="end" >5</text>
<rect x="715.8" y="1797.8" width="408.20000000000005" height="2" fill="#d9e1e7"/>
<text x="705.6" y="1806.8" font-size="23.5" fill="#97abbf" font-weight="normal" text-anchor="end" >0</text>
<rect x="739.7" y="1799.8" width="2" height="7" fill="#4d4d4d"/>
<text x="740.7" y="1823.5" font-size="18.9" fill="#9cafc1" font-weight="normal" text-anchor="middle" >09:00 PM</text>
<rect x="839.8" y="1799.8" width="2" height="7" fill="#4d4d4d"/>
<text x="840.8" y="1823.5" font-size="18.9" fill="#9cafc1" font-weight="normal" text-anchor="middle" >03:00 AM</text>
<rect x="939.9" y="1799.8" width="2" height="7" fill="#4d4d4d"/>
<text x="940.9" y="1823.5" font-size="18.9" fill="#9cafc1" font-weight="normal" text-anchor="middle" >09:00 AM</text>
<rect x="1040.0" y="1799.8" width="2" height="7" fill="#4d4d4d"/>
<text x="1041.0" y="1823.5" font-size="18.9" fill="#9cafc1" font-weight="normal" text-anchor="middle" >03:00 PM</text>
<text x="0" y="0" font-size="21" fill="#676767" font-weight="bold" text-anchor="middle" transform="translate(665.0,1676.0) rotate(-90)">Requests</text>
<rect x="737.9" y="1684.6" width="2.2" height="113.4" fill="#8ee0fb"/>
<rect x="752.0" y="1668.4" width="2.2" height="129.6" fill="#8ee0fb"/>
<rect x="757.9" y="1700.8" width="2.2" height="97.2" fill="#0aa2d6"/>
<rect x="765.8" y="1587.4" width="2.2" height="210.6" fill="#8ee0fb"/>
<rect x="771.8" y="1684.6" width="2.2" height="113.4" fill="#0aa2d6"/>
<rect x="791.8" y="1668.4" width="2.2" height="129.6" fill="#0aa2d6"/>
<rect x="803.8" y="1668.4" width="2.2" height="129.6" fill="#0aa2d6"/>
<rect x="831.9" y="1717.0" width="2.2" height="81.0" fill="#8ee0fb"/>
<rect x="836.0" y="1700.8" width="2.2" height="97.2" fill="#0aa2d6"/>
<rect x="836.0" y="1668.4" width="2.2" height="32.4" fill="#8ee0fb"/>
<rect x="850.0" y="1700.8" width="2.2" height="97.2" fill="#8ee0fb"/>
<rect x="851.9" y="1668.4" width="2.2" height="129.6" fill="#8ee0fb"/>
<rect x="857.7" y="1700.8" width="2.2" height="97.2" fill="#0aa2d6"/>
<rect x="863.8" y="1603.6" width="2.2" height="194.4" fill="#0aa2d6"/>
<rect x="872.0" y="1717.0" width="2.2" height="81.0" fill="#8ee0fb"/>
<rect x="873.9" y="1668.4" width="2.2" height="129.6" fill="#8ee0fb"/>
<rect x="875.9" y="1636.0" width="2.2" height="162.0" fill="#8ee0fb"/>
<rect x="881.8" y="1652.2" width="2.2" height="145.8" fill="#0aa2d6"/>
<rect x="890.0" y="1636.0" width="2.2" height="162.0" fill="#0aa2d6"/>
<rect x="899.9" y="1652.2" width="2.2" height="145.8" fill="#8ee0fb"/>
<rect x="909.9" y="1619.8" width="2.2" height="178.2" fill="#0aa2d6"/>
<rect x="931.9" y="1684.6" width="2.2" height="113.4" fill="#0aa2d6"/>
<rect x="935.9" y="1684.6" width="2.2" height="113.4" fill="#0aa2d6"/>
<rect x="956.0" y="1717.0" width="2.2" height="81.0" fill="#8ee0fb"/>
<rect x="957.9" y="1652.2" width="2.2" height="145.8" fill="#8ee0fb"/>
<rect x="965.8" y="1684.6" width="2.2" height="113.4" fill="#0aa2d6"/>
<rect x="987.9" y="1684.6" width="2.2" height="113.4" fill="#0aa2d6"/>
<rect x="991.8" y="1668.4" width="2.2" height="129.6" fill="#0aa2d6"/>
<rect x="1001.8" y="1700.8" width="2.2" height="97.2" fill="#8ee0fb"/>
<rect x="1008.0" y="1636.0" width="2.2" height="162.0" fill="#0aa2d6"/>
<rect x="1017.9" y="1668.4" width="2.2" height="129.6" fill="#8ee0fb"/>
<rect x="1036.0" y="1668.4" width="2.2" height="129.6" fill="#0aa2d6"/>
<rect x="1049.8" y="1668.4" width="2.2" height="129.6" fill="#0aa2d6"/>
<rect x="1053.8" y="1668.4" width="2.2" height="129.6" fill="#8ee0fb"/>
<rect x="1070.0" y="1636.0" width="2.2" height="162.0" fill="#8ee0fb"/>
<rect x="1074.0" y="1668.4" width="2.2" height="129.6" fill="#0aa2d6"/>
<rect x="1089.8" y="1700.8" width="2.2" height="97.2" fill="#0aa2d6"/>
<rect x="1091.8" y="1684.6" width="2.2" height="113.4" fill="#0aa2d6"/>
<rect x="1094.0" y="1733.2" width="2.2" height="64.8" fill="#8ee0fb"/>
<rect x="1096.0" y="1652.2" width="2.2" height="145.8" fill="#0aa2d6"/>
<rect x="1099.9" y="1717.0" width="2.2" height="81.0" fill="#8ee0fb"/>
<rect x="1107.8" y="1684.6" width="2.2" height="113.4" fill="#8ee0fb"/>
<rect x="1110.0" y="1652.2" width="2.2" height="145.8" fill="#0aa2d6"/>
<circle cx="657.8" cy="1898.4" r="10" fill="#8ee0fb"/>
<text x="679.0" y="1908.0" font-size="24.6" fill="#1d2936" font-weight="normal" text-anchor="start" >targetgroup/Prod-API/84e325b14c814ee9</text>
<circle cx="657.8" cy="1954" r="10" fill="#0aa2d6"/>
<text x="679.0" y="1963.6" font-size="24.6" fill="#1d2936" font-weight="normal" text-anchor="start" >targetgroup/Prod-frontend/92e3199b1rc8</text>
<rect x="1299.8" y="1553.6" width="408.20000000000005" height="2" fill="#d9e1e7"/>
<text x="1289.6" y="1562.6" font-size="23.5" fill="#97abbf" font-weight="normal" text-anchor="end" >15</text>
<rect x="1299.8" y="1635.0" width="408.20000000000005" height="2" fill="#d9e1e7"/>
<text x="1289.6" y="1644.0" font-size="23.5" fill="#97abbf" font-weight="normal" text-anchor="end" >10</text>
<rect x="1299.8" y="1716.4" width="408.20000000000005" height="2" fill="#d9e1e7"/>
<text x="1289.6" y="1725.4" font-size="23.5" fill="#97abbf" font-weight="normal" text-anchor="end" >5</text>
<rect x="1299.8" y="1797.8" width="408.20000000000005" height="2" fill="#d9e1e7"/>
<text x="1289.6" y="1806.8" font-size="23.5" fill="#97abbf" font-weight="normal" text-anchor="end" >0</text>
<rect x="1323.7" y="1799.8" width="2" height="7" fill="#4d4d4d"/>
<text x="1324.7" y="1823.5" font-size="18.9" fill="#9cafc1" font-weight="normal" text-anchor="middle" >09:00 PM</text>
<rect x="1423.8" y="1799.8" width="2" height="7" fill="#4d4d4d"/>
<text x="1424.8" y="1823.5" font-size="18.9" fill="#9cafc1" font-weight="normal" text-anchor="middle" >03:00 AM</text>
<rect x="1523.9" y="1799.8" width="2" height="7" fill="#4d4d4d"/>
<text x="1524.9" y="1823.5" font-size="18.9" fill="#9cafc1" font-weight="normal" text-anchor="middle" >09:00 AM</text>
<rect x="1624.0" y="1799.8" width="2" height="7" fill="#4d4d4d"/>
<text x="1625.0" y="1823.5" font-size="18.9" fill="#9cafc1" font-weight="normal" text-anchor="middle" >03:00 PM</text>
<text x="0" y="0" font-size="21" fill="#676767" font-weight="bold" text-anchor="middle" transform="translate(1249.0,1676.0) rotate(-90)">Requests</text>
<rect x="1324.1" y="1700.8" width="2.2" height="97.2" fill="#8ee0fb"/>
<rect x="1327.9" y="1749.4" width="2.2" height="48.6" fill="#4a1d8c"/>
<rect x="1334.0" y="1733.2" width="2.2" height="64.8" fill="#1f9a48"/>
<rect x="1340.0" y="1717.0" width="2.2" height="81.0" fill="#6b5400"/>
<rect x="1344.0" y="1717.0" width="2.2" height="81.0" fill="#6b5400"/>
<rect x="1350.0" y="1700.8" width="2.2" height="97.2" fill="#6b5400"/>
<rect x="1352.0" y="1684.6" width="2.2" height="113.4" fill="#8ee0fb"/>
<rect x="1355.9" y="1700.8" width="2.2" height="97.2" fill="#6b5400"/>
<rect x="1358.0" y="1749.4" width="2.2" height="48.6" fill="#4a1d8c"/>
<rect x="1375.9" y="1668.4" width="2.2" height="129.6" fill="#8ee0fb"/>
<rect x="1378.0" y="1700.8" width="2.2" height="97.2" fill="#6b5400"/>
<rect x="1384.1" y="1765.6" width="2.2" height="32.4" fill="#4a1d8c"/>
<rect x="1386.0" y="1684.6" width="2.2" height="113.4" fill="#6b5400"/>
<rect x="1390.0" y="1700.8" width="2.2" height="97.2" fill="#8ee0fb"/>
<rect x="1391.8" y="1765.6" width="2.2" height="32.4" fill="#4a1d8c"/>
<rect x="1397.9" y="1684.6" width="2.2" height="113.4" fill="#8ee0fb"/>
<rect x="1402.0" y="1749.4" width="2.2" height="48.6" fill="#4a1d8c"/>
<rect x="1415.9" y="1733.2" width="2.2" height="64.8" fill="#6b5400"/>
<rect x="1418.3" y="1717.0" width="2.2" height="81.0" fill="#6b5400"/>
<rect x="1420.0" y="1700.8" width="2.2" height="97.2" fill="#6b5400"/>
<rect x="1434.0" y="1765.6" width="2.2" height="32.4" fill="#1f9a48"/>
<rect x="1436.0" y="1700.8" width="2.2" height="97.2" fill="#6b5400"/>
<rect x="1438.0" y="1749.4" width="2.2" height="48.6" fill="#4a1d8c"/>
<rect x="1444.0" y="1749.4" width="2.2" height="48.6" fill="#4a1d8c"/>
<rect x="1446.0" y="1684.6" width="2.2" height="113.4" fill="#8ee0fb"/>
<rect x="1446.0" y="1603.6" width="2.2" height="81.0" fill="#6b5400"/>
<rect x="1456.0" y="1749.4" width="2.2" height="48.6" fill="#1f9a48"/>
<rect x="1458.0" y="1684.6" width="2.2" height="113.4" fill="#8ee0fb"/>
<rect x="1460.0" y="1652.2" width="2.2" height="145.8" fill="#6b5400"/>
<rect x="1470.0" y="1749.4" width="2.2" height="48.6" fill="#1f9a48"/>
<rect x="1479.8" y="1765.6" width="2.2" height="32.4" fill="#4a1d8c"/>
<rect x="1485.9" y="1652.2" width="2.2" height="145.8" fill="#8ee0fb"/>
<rect x="1491.9" y="1733.2" width="2.2" height="64.8" fill="#6b5400"/>
<rect x="1503.8" y="1749.4" width="2.2" height="48.6" fill="#1f9a48"/>
<rect x="1512.0" y="1765.6" width="2.2" height="32.4" fill="#4a1d8c"/>
<rect x="1513.8" y="1717.0" width="2.2" height="81.0" fill="#6b5400"/>
<rect x="1517.9" y="1717.0" width="2.2" height="81.0" fill="#6b5400"/>
<rect x="1519.9" y="1700.8" width="2.2" height="97.2" fill="#8ee0fb"/>
<rect x="1525.9" y="1749.4" width="2.2" height="48.6" fill="#4a1d8c"/>
<rect x="1531.9" y="1668.4" width="2.2" height="129.6" fill="#8ee0fb"/>
<rect x="1534.0" y="1733.2" width="2.2" height="64.8" fill="#6b5400"/>
<rect x="1540.0" y="1749.4" width="2.2" height="48.6" fill="#1f9a48"/>
<rect x="1544.0" y="1765.6" width="2.2" height="32.4" fill="#3dd9b5"/>
<rect x="1547.8" y="1652.2" width="2.2" height="145.8" fill="#6b5400"/>
<rect x="1552.0" y="1749.4" width="2.2" height="48.6" fill="#4a1d8c"/>
<rect x="1553.9" y="1717.0" width="2.2" height="81.0" fill="#8ee0fb"/>
<rect x="1565.9" y="1765.6" width="2.2" height="32.4" fill="#1f9a48"/>
<rect x="1569.9" y="1733.2" width="2.2" height="64.8" fill="#6b5400"/>
<rect x="1571.9" y="1765.6" width="2.2" height="32.4" fill="#1f9a48"/>
<rect x="1574.0" y="1668.4" width="2.2" height="129.6" fill="#6b5400"/>
<rect x="1581.9" y="1684.6" width="2.2" height="113.4" fill="#8ee0fb"/>
<rect x="1588.0" y="1684.6" width="2.2" height="113.4" fill="#8ee0fb"/>
<rect x="1590.0" y="1717.0" width="2.2" height="81.0" fill="#6b5400"/>
<rect x="1592.0" y="1636.0" width="2.2" height="162.0" fill="#8ee0fb"/>
<rect x="1612.0" y="1684.6" width="2.2" height="113.4" fill="#8ee0fb"/>
<rect x="1618.0" y="1717.0" width="2.2" height="81.0" fill="#6b5400"/>
<rect x="1619.9" y="1652.2" width="2.2" height="145.8" fill="#8ee0fb"/>
<rect x="1634.0" y="1765.6" width="2.2" height="32.4" fill="#1f9a48"/>
<rect x="1636.0" y="1700.8" width="2.2" height="97.2" fill="#8ee0fb"/>
<rect x="1638.0" y="1700.8" width="2.2" height="97.2" fill="#6b5400"/>
<rect x="1644.0" y="1700.8" width="2.2" height="97.2" fill="#6b5400"/>
<rect x="1656.0" y="1700.8" width="2.2" height="97.2" fill="#8ee0fb"/>
<rect x="1666.0" y="1717.0" width="2.2" height="81.0" fill="#6b5400"/>
<rect x="1670.0" y="1700.8" width="2.2" height="97.2" fill="#8ee0fb"/>
<rect x="1676.0" y="1765.6" width="2.2" height="32.4" fill="#1f9a48"/>
<rect x="1678.0" y="1749.4" width="2.2" height="48.6" fill="#4a1d8c"/>
<rect x="1678.0" y="1717.0" width="2.2" height="32.4" fill="#6b5400"/>
<rect x="1688.0" y="1749.4" width="2.2" height="48.6" fill="#1f9a48"/>
<rect x="1694.0" y="1749.4" width="2.2" height="48.6" fill="#4a1d8c"/>
<rect x="1700.0" y="1717.0" width="2.2" height="81.0" fill="#6b5400"/>
<rect x="1704.0" y="1717.0" width="2.2" height="81.0" fill="#8ee0fb"/>
<circle cx="1242" cy="1898.4" r="10" fill="#3dd9b5"/>
<text x="1263.8" y="1908.0" font-size="24.6" fill="#1d2936" font-weight="normal" text-anchor="start" >10.162.167.223</text>
<circle cx="1460" cy="1898.4" r="10" fill="#1f9a48"/>
<text x="1481.0" y="1908.0" font-size="24.6" fill="#1d2936" font-weight="normal" text-anchor="start" >10.162.17.140</text>
<circle cx="1242" cy="1954" r="10" fill="#6b5400"/>
<text x="1263.8" y="1963.6" font-size="24.6" fill="#1d2936" font-weight="normal" text-anchor="start" >10.162.214.247</text>
<circle cx="1460" cy="1954" r="10" fill="#8ee0fb"/>
<text x="1481.0" y="1963.6" font-size="24.6" fill="#1d2936" font-weight="normal" text-anchor="start" >10.168.203.134</text>
<rect x="1892" y="1553.7" width="401.6999999999998" height="2" fill="#d9e1e7"/>
<text x="1881.3" y="1562.7" font-size="23.5" fill="#97abbf" font-weight="normal" text-anchor="end" >1.5</text>
<rect x="1892" y="1649.6" width="401.6999999999998" height="2" fill="#d9e1e7"/>
<text x="1881.3" y="1658.6" font-size="23.5" fill="#97abbf" font-weight="normal" text-anchor="end" >1</text>
<rect x="1892" y="1745.5" width="401.6999999999998" height="2" fill="#d9e1e7"/>
<text x="1881.3" y="1754.5" font-size="23.5" fill="#97abbf" font-weight="normal" text-anchor="end" >0.5</text>
<rect x="1892" y="1841.4" width="401.6999999999998" height="2" fill="#d9e1e7"/>
<text x="1881.3" y="1850.4" font-size="23.5" fill="#97abbf" font-weight="normal" text-anchor="end" >0</text>
<rect x="1919.8" y="1843.4" width="2" height="7" fill="#4d4d4d"/>
<text x="1920.8" y="1867.7" font-size="18.9" fill="#9cafc1" font-weight="normal" text-anchor="middle" >09:00 PM</text>
<rect x="2016.5" y="1843.4" width="2" height="7" fill="#4d4d4d"/>
<text x="2017.5" y="1867.7" font-size="18.9" fill="#9cafc1" font-weight="normal" text-anchor="middle" >03:00 AM</text>
<rect x="2113.3" y="1843.4" width="2" height="7" fill="#4d4d4d"/>
<text x="2114.3" y="1867.7" font-size="18.9" fill="#9cafc1" font-weight="normal" text-anchor="middle" >09:00 AM</text>
<rect x="2210.1" y="1843.4" width="2" height="7" fill="#4d4d4d"/>
<text x="2211.1" y="1867.7" font-size="18.9" fill="#9cafc1" font-weight="normal" text-anchor="middle" >03:00 PM</text>
<text x="0" y="0" font-size="21" fill="#676767" font-weight="bold" text-anchor="middle" transform="translate(1833.4,1698.0) rotate(-90)">Requests</text>
<rect x="1910" y="1650.6" width="4" height="191.8" fill="#3dd9b5"/>
<circle cx="1825.8" cy="1941.8" r="10" fill="#3dd9b5"/>
<text x="1846.7" y="1951.7" font-size="24.6" fill="#1d2936" font-weight="normal" text-anchor="start" >10.168.203.134</text>
<text x="39.4" y="76.0" font-size="27.6" fill="#7f98b1" font-weight="normal" text-anchor="start" >Dashboards</text>
<text x="202.7" y="76.0" font-size="28" fill="#283848" font-weight="normal" text-anchor="start" >6. AWS Application Load Balancer - Requests and Processed Bytes</text>
<rect x="202" y="88.1" width="872" height="2" fill="#a8bacb"/>
<path d="M1055.8 66.4L1062.1 72.7L1068.4 66.4" stroke="#a6b5c4" stroke-width="2.3" stroke-linecap="round" fill="none"/>
<circle cx="2082" cy="64" r="12.1" stroke="#8aa0b6" stroke-width="3.6" fill="none"/>
<path d="M2081.1 56.1H2083.9V65.9H2076V63H2081.1Z" fill="#889eb5"/>
<text x="2107.0" y="76.0" font-size="33" fill="#2b2b2b" font-weight="normal" text-anchor="start" stroke="#2b2b2b" stroke-width="0.9">-24h</text>
<g fill="none" stroke="#889eb5" stroke-width="3.8"><path d="M2217.8 66.2A12.1 12.1 0 0 1 2239.6 58.8"/><path d="M2242 66.2A12.1 12.1 0 0 1 2220.3 73.6"/></g>
<path d="M2244 52.1V63H2233z" fill="#889eb5"/><path d="M2216 69.2H2227L2216 80z" fill="#889eb5"/>
<circle cx="2308" cy="55" r="3.8" fill="#8aa0b6"/>
<circle cx="2308" cy="66" r="3.8" fill="#8aa0b6"/>
<circle cx="2308" cy="76.5" r="3.8" fill="#8aa0b6"/>
<rect x="8" y="124" width="2338" height="82" rx="5" fill="#dde3e8"/>
<rect x="8" y="125.5" width="2338" height="80.5" rx="5" fill="#fff"/>
<defs><clipPath id="cl4"><rect x="1470" y="130" width="296" height="70"/></clipPath></defs>
<text x="41.0" y="176.0" font-size="28.4" fill="#7f98b1" font-weight="normal" text-anchor="start" >account</text>
<g>
<text x="155.0" y="176.0" font-size="28.4" fill="#5b7898" font-weight="normal" text-anchor="start" >prod</text>
</g>
<line x1="154" y1="189" x2="450" y2="189" stroke="#a9bbcc" stroke-width="2" stroke-dasharray="6 4"/>
<text x="483.4" y="176.0" font-size="28.4" fill="#7f98b1" font-weight="normal" text-anchor="start" >region</text>
<g>
<text x="575.0" y="176.0" font-size="28.4" fill="#5b7898" font-weight="normal" text-anchor="start" >us-east-1</text>
</g>
<line x1="574" y1="189" x2="870" y2="189" stroke="#a9bbcc" stroke-width="2" stroke-dasharray="6 4"/>
<text x="902.2" y="176.0" font-size="28.4" fill="#7f98b1" font-weight="normal" text-anchor="start" >namespace</text>
<g>
<text x="1061.0" y="176.0" font-size="28.4" fill="#5b7898" font-weight="normal" text-anchor="start" >aws/applicationelb</text>
</g>
<line x1="1060" y1="189" x2="1356" y2="189" stroke="#a9bbcc" stroke-width="2" stroke-dasharray="6 4"/>
<text x="1388.8" y="176.0" font-size="28.4" fill="#7f98b1" font-weight="normal" text-anchor="start" >entity</text>
<g clip-path="url(#cl4)">
<text x="1471.0" y="176.0" font-size="28.4" fill="#5b7898" font-weight="normal" text-anchor="start" >prod/sumologic-backup-v2/1234567890123456</text>
</g>
<line x1="1470" y1="189" x2="1766" y2="189" stroke="#a9bbcc" stroke-width="2" stroke-dasharray="6 4"/>
</svg>
<div id="shl"></div><div id="shb"></div><div id="fade"></div><div id="fade2"></div>
</body></html>
